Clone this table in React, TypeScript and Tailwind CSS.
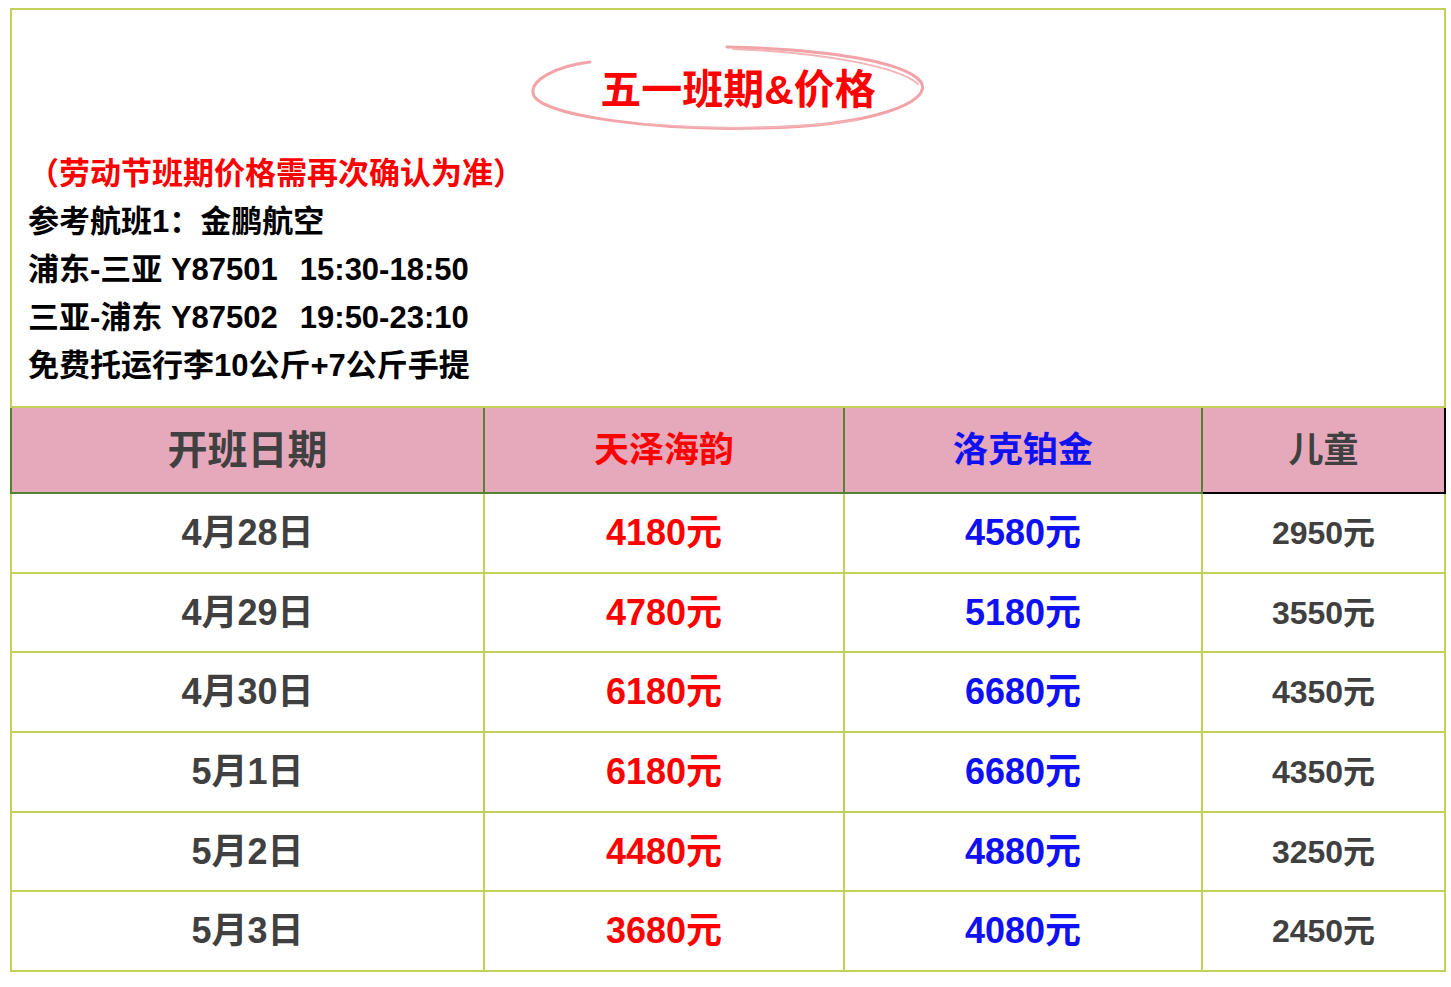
import React from "react";

const FONT = { fontFamily: '"Liberation Sans", Arial, "Noto Sans CJK SC", sans-serif' };

const rows = [
  { d: "4月28日", a: "4180元", b: "4580元", c: "2950元" },
  { d: "4月29日", a: "4780元", b: "5180元", c: "3550元" },
  { d: "4月30日", a: "6180元", b: "6680元", c: "4350元" },
  { d: "5月1日", a: "6180元", b: "6680元", c: "4350元" },
  { d: "5月2日", a: "4480元", b: "4880元", c: "3250元" },
  { d: "5月3日", a: "3680元", b: "4080元", c: "2450元" },
];
const heights = ["h-[80px]", "h-[79px]", "h-[80px]", "h-[80px]", "h-[79px]", "h-[80px]"];

export default function App() {
  return (
    <div className="min-h-[987px] w-[1451px] bg-white" style={FONT}>
      <div className="ml-[10px] pt-[8px] w-[1436px]">
        {/* top section */}
        <div className="border-2 border-b-0 border-[#c3d15b] h-[398px] flex flex-col">
          <div className="relative h-[140px] flex items-center justify-center pt-[20px]">
            <svg
              className="absolute left-[516px] top-[34px] overflow-visible"
              width="400"
              height="90"
              viewBox="0 0 400 90"
            >
              <path
                d="M199,3 C300,5 378,18 393,38 C405,58 345,82 232,84 C128,87 18,72 6,52 C-1,37 28,22 62,18"
                fill="none"
                stroke="#f2a3a8"
                strokeWidth="3"
                strokeLinecap="round"
              />
              <path
                d="M205,5 C290,8 370,22 390,40"
                fill="none"
                stroke="#f4b3b6"
                strokeWidth="2"
                strokeLinecap="round"
              />
              <path
                d="M120,80 C180,85 260,86 330,76"
                fill="none"
                stroke="#f4b3b6"
                strokeWidth="1.5"
                strokeLinecap="round"
              />
            </svg>
            <span className="relative ml-[20px] text-[41px] font-bold leading-none text-[#ff0000]">
              五一班期&amp;价格
            </span>
          </div>
          <div className="pl-[16px] text-[31px] font-bold leading-[48px] text-black">
            <div className="text-[#ff0000]">（劳动节班期价格需再次确认为准）</div>
            <div>参考航班1：金鹏航空</div>
            <div className="whitespace-pre">
              浦东-三亚 Y87501<span className="ml-[22px]">15:30-18:50</span>
            </div>
            <div className="whitespace-pre">
              三亚-浦东 Y87502<span className="ml-[22px]">19:50-23:10</span>
            </div>
            <div>免费托运行李10公斤+7公斤手提</div>
          </div>
        </div>

        {/* header row */}
        <div className="flex border-t-2 border-[#c3d15b] h-[88px] font-bold">
          <div className="w-[475px] border-l-2 border-r-2 border-b-2 border-[#548235] bg-[#e6a9bb] flex items-center justify-center text-[40px] text-[#404040]">
            开班日期
          </div>
          <div className="w-[360px] border-r-2 border-b-2 border-[#548235] bg-[#e6a9bb] flex items-center justify-center text-[35px] text-[#ff0000]">
            天泽海韵
          </div>
          <div className="w-[358px] border-r-2 border-b-2 border-[#548235] bg-[#e6a9bb] flex items-center justify-center text-[35px] text-[#1010f5]">
            洛克铂金
          </div>
          <div className="w-[243px] border-r-2 border-b-2 border-black bg-[#e6a9bb] flex items-center justify-center text-[35px] text-[#404040]">
            儿童
          </div>
        </div>

        {/* body rows */}
        {rows.map((r, i) => (
          <div key={i} className={`flex ${heights[i]} font-bold`}>
            <div className="w-[475px] border-l-2 border-r-2 border-b-2 border-[#c3d15b] flex items-center justify-center text-[36px] text-[#404040]">
              {r.d}
            </div>
            <div className="w-[360px] border-r-2 border-b-2 border-[#c3d15b] flex items-center justify-center text-[36px] text-[#ff0000]">
              {r.a}
            </div>
            <div className="w-[358px] border-r-2 border-b-2 border-[#c3d15b] flex items-center justify-center text-[36px] text-[#1010f5]">
              {r.b}
            </div>
            <div className="w-[243px] border-r-2 border-b-2 border-[#c3d15b] flex items-center justify-center text-[32px] text-[#404040]">
              {r.c}
            </div>
          </div>
        ))}
      </div>
    </div>
  );
}
